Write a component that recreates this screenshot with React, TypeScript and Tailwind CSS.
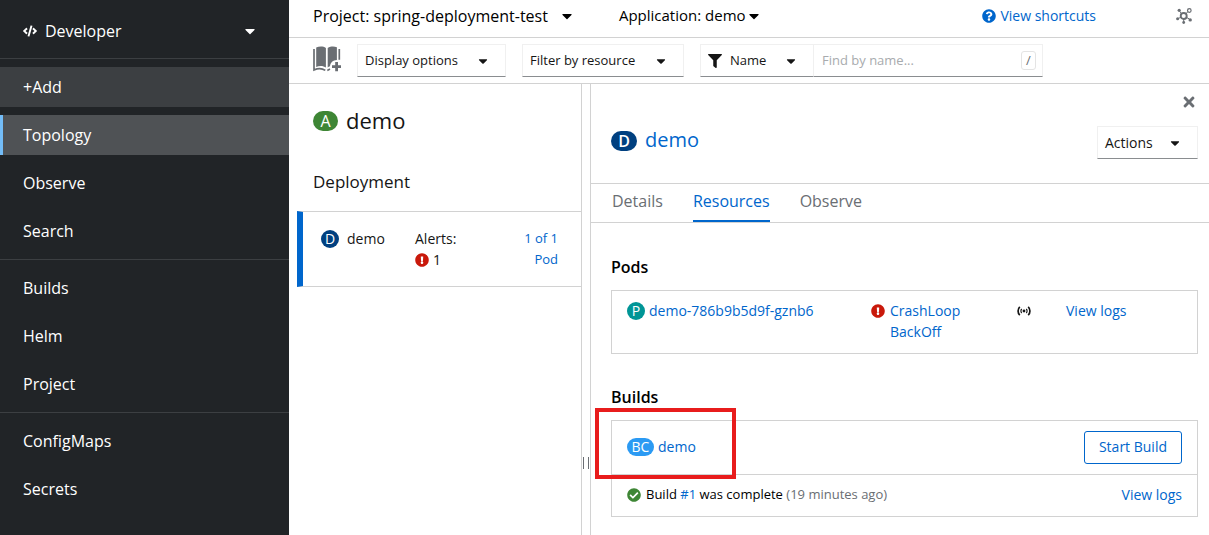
import React from "react";
import {
  FaCaretDown,
  FaCheckCircle,
  FaCode,
  FaExclamationCircle,
  FaFilter,
  FaQuestionCircle,
  FaTimes,
} from "react-icons/fa";

const navSections: string[][] = [
  ["+Add", "Topology", "Observe", "Search"],
  ["Builds", "Helm", "Project"],
  ["ConfigMaps", "Secrets"],
];

const navTone: Record<string, string> = {
  "+Add": "border-transparent bg-[#3c3f42]",
  Topology: "border-[#73bcf7] bg-[#4f5255]",
};

function Sidebar() {
  return (
    <aside className="w-[289px] shrink-0 bg-[#212427] text-base text-white">
      <button
        type="button"
        className="flex h-[59px] w-full items-center border-b border-[#3c3f42] pt-1 pr-[31px] pl-[23px] text-left"
      >
        <FaCode className="mr-2 size-[14px]" />
        <span className="flex-1">Developer</span>
        <FaCaretDown className="size-4" />
      </button>
      <nav aria-label="Main">
        {navSections.map((items, i) => (
          <ul
            key={items[0]}
            className={
              i < navSections.length - 1
                ? "flex flex-col gap-2 border-b border-[#3c3f42] py-2"
                : "flex flex-col gap-2 py-2"
            }
          >
            {items.map((item) => (
              <li key={item}>
                <a
                  href="#"
                  className={`flex h-10 items-center border-l-3 pl-5 ${navTone[item] ?? "border-transparent"}`}
                >
                  {item}
                </a>
              </li>
            ))}
          </ul>
        ))}
      </nav>
    </aside>
  );
}

function CatalogIcon() {
  return (
    <svg viewBox="0 0 28 26" className="h-[26px] w-7" fill="#6a6e73" aria-hidden="true">
      <path d="M3.200 1.600C6 .2 10 0 12.900 1.900V21.600C10.500 19.600 6 19.600 3.200 21Z" />
      <path d="M14.700 1.900C17.500 .2 21 0 23.900 1.200V14C20 14.300 17.300 16.500 17 20.300C16 20.400 15.300 20.800 14.700 21.600Z" />
      <path
        d="M1 3V23.900C4.500 22.300 9 22 12.300 24.400M14.300 24.400L17 23M26.300 3V13.800"
        fill="none"
        stroke="#6a6e73"
        strokeWidth="1.700"
      />
      <path d="M22.200 16h2.800v3.200H28v2.800h-3v3.200h-2.800V22H19v-2.800h3.200z" />
    </svg>
  );
}

function TopologyIcon() {
  return (
    <svg viewBox="0 0 16 16" className="size-4" fill="none" stroke="#6a6e73" aria-hidden="true">
      <circle cx="7.700" cy="8" r="3" strokeWidth="1.900" />
      <path d="M5.600 5.800 3.700 3.300M9.900 5.900l2-2.400M5 9.300l-3 1.200M10.400 9.400l3 1.600M7.700 11v3" />
      <circle cx="13.300" cy="2.500" r="1.800" strokeWidth="1.200" />
      <g fill="#6a6e73" stroke="none">
        <circle cx="3.200" cy="2.300" r="1.600" />
        <circle cx="1.600" cy="10.800" r="1.500" />
        <circle cx="14.200" cy="11.900" r="1.700" />
        <circle cx="7.700" cy="14.500" r="1.400" />
      </g>
    </svg>
  );
}

function TrafficIcon() {
  return (
    <svg viewBox="0 0 14 14" className="size-[14px]" fill="none" stroke="#151515" aria-label="Receiving traffic">
      <path d="M2.800 2.800C.5 5 .5 9 2.800 11.200M11.200 2.800C13.500 5 13.500 9 11.200 11.200" strokeWidth="1.700" />
      <path d="M4.700 5C3.700 6 3.700 8 4.700 9M9.300 5C10.300 6 10.300 8 9.300 9" strokeWidth="1.200" />
      <circle cx="7" cy="7" r="1.400" fill="#151515" stroke="none" />
    </svg>
  );
}

function MenuButton({ label, size }: { label: string; size: string }) {
  return (
    <button
      type="button"
      className={`flex h-[33px] items-center justify-between border border-[#f0f0f0] border-b-[#8a8d90] pr-[15px] pl-[7px] ${size}`}
    >
      {label}
      <FaCaretDown className="size-[14px]" />
    </button>
  );
}

function Toolbar() {
  return (
    <div className="flex h-[46px] items-center gap-4 border-b border-[#d2d2d2] pl-6">
      <button type="button" aria-label="Add to project" className="pb-1">
        <CatalogIcon />
      </button>
      <MenuButton label="Display options" size="w-[149px] text-[13px]" />
      <MenuButton label="Filter by resource" size="w-[162px] text-[13px]" />
      <div className="flex">
        <button
          type="button"
          className="flex h-[33px] w-[114px] items-center border border-[#f0f0f0] border-b-[#8a8d90] pr-[15px] pl-[7px] text-[13px]"
        >
          <FaFilter className="mr-2 size-[14px]" />
          Name
          <FaCaretDown className="ml-auto size-[14px]" />
        </button>
        <div className="flex h-[33px] w-[229px] items-center border border-l-0 border-[#f0f0f0] border-b-[#8a8d90] pr-1.5 pl-2">
          <input
            type="text"
            aria-label="Find by name"
            placeholder="Find by name..."
            className="min-w-0 flex-1 text-[13px] outline-none placeholder:text-[#a8abae]"
          />
          <kbd className="flex h-[19px] w-[15px] items-center justify-center rounded-[3px] border border-[#e4e4e4] font-[inherit] text-[13px] text-[#6a6e73]">
            /
          </kbd>
        </div>
      </div>
    </div>
  );
}

function ResourceList() {
  return (
    <section className="w-[293px] shrink-0 border-r border-[#d2d2d2] pl-2">
      <h1 className="flex items-center gap-2 pt-5 pl-4 text-[22px] leading-8">
        <span className="mt-0.5 flex h-5 w-[25px] items-center justify-center rounded-full bg-[#3e8635] text-base text-white">
          A
        </span>
        demo
      </h1>
      <h2 className="mt-8 pl-4 text-[17px] leading-7">Deployment</h2>
      <div className="mt-[15px] flex h-19 items-start border-y border-l-6 border-[#d2d2d2] border-l-[#06c] pt-4 pr-[23px] pl-[18px] text-sm leading-[21px]">
        <div className="flex w-[94px] items-center gap-2">
          <span className="flex size-[18px] items-center justify-center rounded-full bg-[#004080] text-white">D</span>
          demo
        </div>
        <div className="flex-1">
          Alerts:
          <div className="flex items-center gap-1">
            <FaExclamationCircle className="size-[14px] text-[#c9190b]" />1
          </div>
        </div>
        <a href="#" className="w-10 text-right text-[13px] text-[#06c]">
          1 of 1 Pod
        </a>
      </div>
    </section>
  );
}

function DetailPane() {
  return (
    <section className="min-w-0 flex-1 border-l border-[#d2d2d2] text-sm">
      <header className="flex h-[100px] items-start border-b border-[#d2d2d2] pr-[11px] pl-5">
        <h2 className="mt-10 flex flex-1 items-center gap-2 text-xl leading-8">
          <span className="mt-0.5 flex h-5 w-[26px] items-center justify-center rounded-full bg-[#004080] text-base font-semibold text-white">
            D
          </span>
          <a href="#" className="text-[#06c]">demo</a>
        </h2>
        <div className="flex flex-col items-end gap-4 pt-[10px]">
          <button type="button" aria-label="Close" className="mr-px">
            <FaTimes className="size-4 text-[#6a6e73]" />
          </button>
          <MenuButton label="Actions" size="w-[101px] text-sm" />
        </div>
      </header>
      <div role="tablist" className="flex h-[39px] gap-[30px] border-b border-[#d2d2d2] pl-[21px] text-base text-[#6a6e73]">
        <button type="button" role="tab" aria-selected="false" className="pb-1">Details</button>
        <button type="button" role="tab" aria-selected="true" className="border-b-2 border-[#06c] pb-0.5 text-[#06c]">
          Resources
        </button>
        <button type="button" role="tab" aria-selected="false" className="pb-1">Observe</button>
      </div>

      <div className="pr-[11px] pl-5 leading-[21px]">
        <h3 className="pt-8 text-base leading-6 font-semibold text-black">Pods</h3>
        <div className="mt-[11px] flex h-16 items-start border border-[#d2d2d2] px-[15px] pt-[9px]">
          <a href="#" className="flex w-[244px] items-center gap-1 text-[#06c]">
            <span className="flex size-[18px] items-center justify-center rounded-full bg-[#009596] text-white">P</span>
            demo-786b9b5d9f-gznb6
          </a>
          <button type="button" className="flex w-[146px] text-left text-[#06c]">
            <FaExclamationCircle className="mt-1 mr-[5px] size-[14px] text-[#c9190b]" />
            <span>
              CrashLoop
              <br />
              BackOff
            </span>
          </button>
          <span className="w-[49px] pt-1">
            <TrafficIcon />
          </span>
          <a href="#" className="text-[#06c]">View logs</a>
        </div>

        <h3 className="pt-[31px] text-base leading-6 font-semibold text-black">Builds</h3>
        <div className="mt-[11px] border border-[#d2d2d2]">
          <div className="relative flex h-[53px] items-center justify-between px-[15px]">
            <a href="#" className="flex items-center gap-1 pb-0.5 text-[#06c]">
              <span className="flex h-[18px] w-[27px] items-center justify-center rounded-full bg-[#2b9af3] text-white">BC</span>
              demo
            </a>
            <button type="button" className="h-[33px] rounded-[3px] border border-[#06c] px-[14px] pb-0.5 text-[#06c]">
              Start Build
            </button>
            <div className="pointer-events-none absolute -top-[13px] -left-[17px] h-[71px] w-[141px] border-4 border-[#e81c1c]" />
          </div>
          <div className="flex h-[42px] items-center border-t border-[#d2d2d2] px-[15px] pb-0.5">
            <FaCheckCircle className="mr-[5px] size-[14px] text-[#3e8635]" />
            <p className="flex-1 text-[13px] text-[#6a6e73]">
              <span className="text-black">Build </span>
              <a href="#" className="text-[#06c]">#1</a>
              <span className="text-black"> was complete</span> (19 minutes ago)
            </p>
            <a href="#" className="text-[#06c]">View logs</a>
          </div>
        </div>
      </div>
    </section>
  );
}

export default function App() {
  return (
    <div className="flex min-h-screen bg-white font-['Open_Sans',sans-serif] text-[#151515]">
      <Sidebar />
      <main className="flex min-w-0 flex-1 flex-col">
        <div className="flex h-[38px] items-center border-b border-[#d2d2d2] pr-[17px] pb-1.5 pl-6 text-base text-black">
          <button type="button" className="flex items-center gap-[11px]">
            Project: spring-deployment-test
            <FaCaretDown className="size-4" />
          </button>
          <button type="button" className="ml-11 flex items-center text-[15px]">
            Application: demo
            <FaCaretDown className="size-4" />
          </button>
          <a href="#" className="ml-auto flex items-center gap-1 text-sm text-[#06c]">
            <FaQuestionCircle className="size-[14px]" />
            View shortcuts
          </a>
          <button type="button" aria-label="Graph view" className="ml-20">
            <TopologyIcon />
          </button>
        </div>
        <Toolbar />
        <div className="flex flex-1">
          <ResourceList />
          <div
            role="separator"
            aria-orientation="vertical"
            className="flex w-2 shrink-0 items-end justify-center gap-1 pb-[66px]"
          >
            <span className="h-3 w-px bg-[#6a6e73]" />
            <span className="h-3 w-px bg-[#6a6e73]" />
          </div>
          <DetailPane />
        </div>
      </main>
    </div>
  );
}
